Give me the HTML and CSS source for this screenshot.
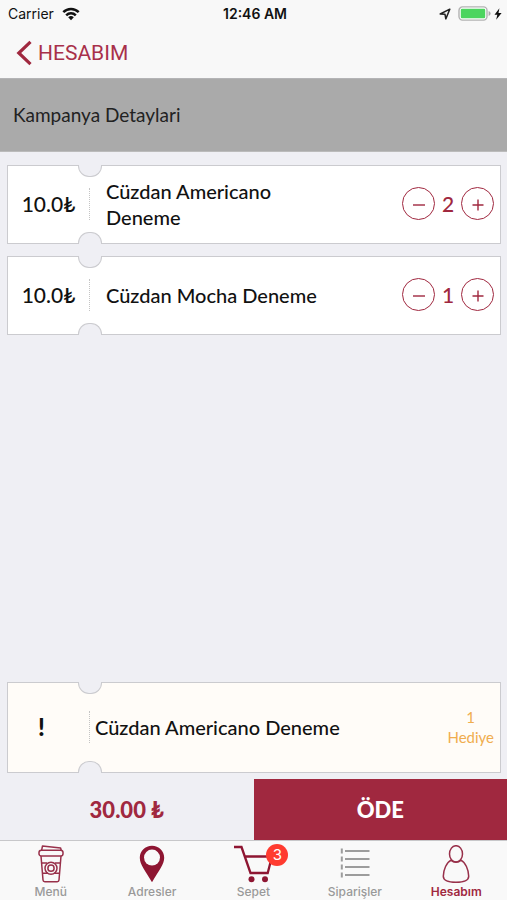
FILE: index.html
```html
<!DOCTYPE html>
<html lang="tr">
<head>
<meta charset="utf-8">
<meta name="viewport" content="width=device-width, initial-scale=1">
<title>Kampanya Detaylari</title>
<link rel="stylesheet" href="styles.css">
</head>
<body>
<div class="app">
  <header class="top">
    <div class="status">
      <div class="status-left">
        <span>Carrier</span>
        <svg width="18" height="14" viewBox="0 0 18 14" aria-hidden="true"><g fill="none" stroke="#111" stroke-width="2.5"><path d="M1.3 5.2a11 11 0 0 1 15.4 0"/><path d="M4.2 8.3a6.8 6.8 0 0 1 9.6 0"/></g><path d="M9 13.2 6.2 10.3a4 4 0 0 1 5.6 0z" fill="#111"/></svg>
      </div>
      <span class="clock">12:46 AM</span>
      <div class="status-right">
        <svg width="12" height="12" viewBox="0 0 12 12" aria-hidden="true"><path d="M1.2 6 10.8 1.2 6.8 10.9 6 6.3z" fill="none" stroke="#222" stroke-width="1.5" stroke-linejoin="round"/></svg>
        <div class="power">
          <svg width="33" height="15" viewBox="0 0 33 15" aria-hidden="true"><rect x="1" y=".9" width="28" height="13.2" rx="3.5" fill="#fff" stroke="#b2b2b2" stroke-width="1.4"/><rect x="2.8" y="2.8" width="24.4" height="9.4" rx="1.2" fill="#4cd55f"/><path d="M30.6 5q2 .8 2 2.5t-2 2.5z" fill="#a8a8a8"/></svg>
          <svg width="8" height="12" viewBox="0 0 8 12" aria-hidden="true"><path d="M5.4.3.5 6.8h2.8L2.2 11.7 7.6 5H4.5z" fill="#111"/></svg>
        </div>
      </div>
    </div>
    <a class="back" href="#hesabim">
      <svg width="17" height="26" viewBox="0 0 17 26" aria-hidden="true"><path d="M14.5 1.8 2.8 13l11.7 11.2" fill="none" stroke="#a0283f" stroke-width="3.2"/></svg>
      <span>HESABIM</span>
    </a>
  </header>
  <h1 class="heading">Kampanya Detaylari</h1>
  <main class="list">
    <article class="ticket">
      <div class="price">10.0₺</div>
      <h2 class="name">Cüzdan Americano Deneme</h2>
      <div class="stepper">
        <button class="step" type="button" aria-label="Azalt"><svg width="14" height="14" viewBox="0 0 14 14"><path d="M1 8h12" stroke="currentColor" stroke-width="1.4"/></svg></button>
        <span class="count">2</span>
        <button class="step" type="button" aria-label="Artır"><svg width="14" height="14" viewBox="0 0 14 14"><path d="M1.5 8h11M7 2.5v11" stroke="currentColor" stroke-width="1.4"/></svg></button>
      </div>
    </article>
    <article class="ticket">
      <div class="price">10.0₺</div>
      <h2 class="name">Cüzdan Mocha Deneme</h2>
      <div class="stepper">
        <button class="step" type="button" aria-label="Azalt"><svg width="14" height="14" viewBox="0 0 14 14"><path d="M1 8h12" stroke="currentColor" stroke-width="1.4"/></svg></button>
        <span class="count">1</span>
        <button class="step" type="button" aria-label="Artır"><svg width="14" height="14" viewBox="0 0 14 14"><path d="M1.5 8h11M7 2.5v11" stroke="currentColor" stroke-width="1.4"/></svg></button>
      </div>
    </article>
    <article class="ticket gift">
      <div class="price mark">!</div>
      <h2 class="name">Cüzdan Americano Deneme</h2>
      <p class="reward">1<br>Hediye</p>
    </article>
  </main>
  <section class="checkout">
    <div class="total">30.00 ₺</div>
    <button class="pay" type="button">ÖDE</button>
  </section>
  <nav class="tabs">
    <a class="tab" href="#menu">
      <svg width="26" height="38" viewBox="0 0 26 38" aria-hidden="true"><g fill="none" stroke="#98304a" stroke-width="1.5" stroke-linejoin="round"><path d="M3.7 5.2 4.5.9l18.1 2 .7 2.8"/><rect x="1" y="5.3" width="24" height="5.7" rx="2.3"/><path d="m3 11 2 24q.1 1.7 1.8 1.7h12.4q1.7 0 1.8-1.7l2-24M3.8 18h5.4M16.8 18h5.4M4.6 28.3h5.2M16.2 28.3h5.2"/><circle cx="13" cy="23.2" r="6"/><circle cx="13" cy="23.2" r="3.1"/></g></svg>
      <span>Menü</span>
    </a>
    <a class="tab" href="#adresler">
      <svg width="26" height="38" viewBox="0 0 26 38" aria-hidden="true"><path d="M13 .8C6.2.8.8 6.1.8 12.8.8 19.7 6 25 13 37.2 20 25 25.2 19.7 25.2 12.8 25.2 6.1 19.8.8 13 .8z" fill="#8e1632"/><circle cx="13" cy="12.6" r="8" fill="#f9f9f9"/></svg>
      <span>Adresler</span>
    </a>
    <a class="tab" href="#sepet">
      <span class="cart">
        <svg width="38" height="38" viewBox="0 0 38 38" aria-hidden="true"><path d="M0 2h7.5l9 26h17.2L38 11.5H11" fill="none" stroke="#8e1632" stroke-width="2.3"/><circle cx="17.5" cy="34.2" r="3" fill="#8e1632"/><circle cx="31" cy="34.2" r="3" fill="#8e1632"/></svg>
        <span class="badge">3</span>
      </span>
      <span>Sepet</span>
    </a>
    <a class="tab" href="#siparisler">
      <svg width="30" height="38" viewBox="0 0 30 38" aria-hidden="true"><path d="M5 6h24.5M5 14h24.5M5 22h24.5M5 30h24.5M1.8 3.5v5M1.8 11.5v5M1.8 19.5v5M1.8 27.5v5" stroke="#9c9c9c" stroke-width="2"/></svg>
      <span>Siparişler</span>
    </a>
    <a class="tab active" href="#hesabim">
      <svg width="28" height="38" viewBox="0 0 28 38" aria-hidden="true"><g fill="none" stroke="#98304a" stroke-width="1.5"><ellipse cx="14" cy="8.9" rx="6.5" ry="8.2"/><path d="M9.2 15.2C4.5 17.5 1.5 24.5 1.3 31.2c0 4 4.2 6 12.7 6s12.7-2 12.7-6c-.2-6.7-3.2-13.7-7.9-16-2.5 2.6-7.1 2.6-9.6 0z"/></g></svg>
      <span>Hesabım</span>
    </a>
  </nav>
</div>
</body>
</html>
```
FILE: styles.css
```css
* { box-sizing: border-box; }
body {
  margin: 0;
  background: #efeff4;
  color: #111;
  font-family: Lato, "Open Sans", sans-serif;
}
h1, h2, p { margin: 0; font-weight: 400; }
a { color: inherit; text-decoration: none; }
button { font: inherit; cursor: pointer; }
svg { display: block; }
.app { min-height: 100vh; display: flex; flex-direction: column; }

.top {
  background: #f8f8f8;
  border-bottom: 1px solid #b4b4b6;
  font-family: Inter, "Liberation Sans", sans-serif;
}
.status {
  height: 27px;
  padding: 0 5px 0 8px;
  display: grid;
  grid-template-columns: 1fr auto 1fr;
  align-items: center;
  font-size: 14px;
}
.status-left { display: flex; align-items: center; gap: 8px; }
.clock { font-weight: 600; }
.status-right { display: flex; align-items: center; justify-content: flex-end; gap: 7px; }
.power { display: flex; align-items: center; gap: 3px; }
.back {
  display: inline-flex;
  align-items: center;
  gap: 5px;
  height: 51px;
  padding: 0 16px;
  color: #a8304a;
  font-family: Roboto, sans-serif;
  font-size: 21px;
}

.heading {
  background: #aaa;
  padding: 24px 13px;
  border-bottom: 1px solid #bbb;
  font-size: 19px;
  line-height: 24px;
  color: #222;
}

.list {
  flex: 1;
  display: flex;
  flex-direction: column;
  gap: 12px;
  padding: 13px 6px 6px 7px;
}
.ticket {
  position: relative;
  display: flex;
  align-items: center;
  min-height: 79px;
  padding: 11px 6px 13px 0;
  background: #fff;
  border: 1px solid #cbcbcf;
}
.ticket::before, .ticket::after {
  content: "";
  position: absolute;
  left: 70px;
  width: 22px;
  height: 11px;
  background: #efeff4;
  border: 1px solid #cbcbcf;
}
.ticket::before { top: -1px; border-top: 0; border-radius: 0 0 11px 11px; }
.ticket::after { bottom: -1px; border-bottom: 0; border-radius: 11px 11px 0 0; }
.price {
  flex: none;
  width: 82px;
  height: 32px;
  line-height: 32px;
  border-right: 1px dotted #c4c4c4;
  text-align: center;
  font-size: 21px;
  font-weight: 500;
}
.name {
  flex: 1;
  max-width: 238px;
  padding-left: 16px;
  font-size: 20px;
  font-weight: 500;
  line-height: 26px;
}
.stepper { margin-left: auto; display: flex; align-items: center; color: #a0283f; }
.step {
  width: 33px;
  height: 33px;
  padding: 0;
  display: grid;
  place-items: center;
  border: 1px solid #a0283f;
  border-radius: 50%;
  background: none;
  color: inherit;
}
.count { width: 26px; text-align: center; font-size: 21px; font-weight: 500; }
.gift { margin-top: auto; min-height: 91px; background: #fffcf8; }
.mark { padding-right: 14px; font-size: 24px; font-weight: 900; }
.gift .name { max-width: none; padding-left: 5px; }
.reward { color: #f0ad4e; font-size: 15px; line-height: 20px; text-align: center; }

.checkout { display: grid; grid-template-columns: 1fr 1fr; height: 61px; }
.total, .pay {
  display: grid;
  place-items: center;
  font-size: 22px;
  font-weight: 900;
}
.total { color: #a0283f; }
.pay { border: 0; background: #a0283f; color: #fff; }

.tabs {
  display: grid;
  grid-template-columns: repeat(5, 1fr);
  height: 60px;
  padding-top: 4px;
  background: #f9f9f9;
  border-top: 1px solid #c8c8ca;
  color: #999;
  font-family: Inter, sans-serif;
  font-size: 12px;
  font-weight: 500;
  line-height: 16px;
}
.tab { display: flex; flex-direction: column; align-items: center; gap: 1px; }
.active { color: #a0283f; font-weight: 600; }
.cart { position: relative; }
.badge {
  position: absolute;
  top: -1px;
  right: -16px;
  width: 22px;
  height: 22px;
  border-radius: 50%;
  background: #ff3b30;
  color: #fff;
  font-size: 15px;
  font-weight: 400;
  line-height: 22px;
  text-align: center;
}
```
